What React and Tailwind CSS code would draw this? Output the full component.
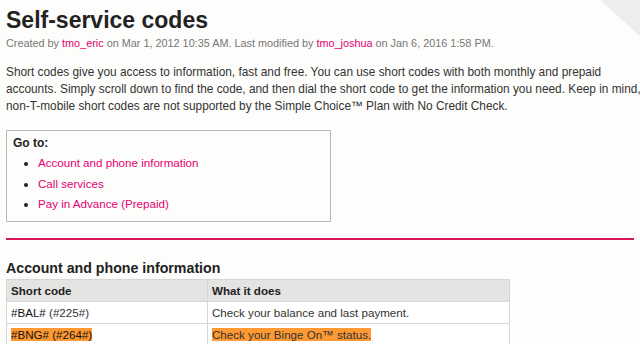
export default function App() {
  const goTo = ["Account and phone information", "Call services", "Pay in Advance (Prepaid)"];
  const intro = [
    "Short codes give you access to information, fast and free. You can use short codes with both monthly and prepaid",
    "accounts. Simply scroll down to find the code, and then dial the short code to get the information you need. Keep in mind,",
    "non-T-mobile short codes are not supported by the Simple Choice™ Plan with No Credit Check.",
  ];

  return (
    <div className="relative w-[640px] h-[344px] overflow-hidden bg-[#fdfdfb] font-[family-name:'Liberation_Sans',Arial,sans-serif] text-[#333]">
      {/* corner fold */}
      <div className="absolute right-0 top-0 w-[40px] h-[36px] bg-[#ededeb] [clip-path:polygon(0_0,100%_0,100%_100%)]" />

      <div className="px-[6px] pt-[6px]">
        <h1 className="text-[23px] leading-[28px] font-bold text-[#222]">Self-service codes</h1>
        <p className="mt-[2px] text-[10.85px] leading-[14px] text-[#777]">
          Created by <span className="text-[#e20074]">tmo_eric</span> on Mar 1, 2012 10:35 AM. Last modified by{" "}
          <span className="text-[#e20074]">tmo_joshua</span> on Jan 6, 2016 1:58 PM.
        </p>

        <p className="mt-[14px] text-[11.85px] leading-[17px] whitespace-nowrap">
          {intro.map((line, i) => (
            <span key={i} className="block">{line}</span>
          ))}
        </p>

        <div className="mt-[15px] w-[325px] h-[92px] border border-[#bbb] px-[6px] pt-[4px]">
          <div className="text-[12px] leading-[17px] font-bold text-[#222]">Go to:</div>
          <ul className="mt-[1px] pl-[25px] list-disc marker:text-[#222] text-[11.6px] leading-[20.5px] text-[#e20074]">
            {goTo.map((item) => (
              <li key={item}>{item}</li>
            ))}
          </ul>
        </div>

        <div className="mt-[16px] w-[628px] h-[2px] bg-[#d6175c]" />

        <h2 className="mt-[19px] text-[14.2px] leading-[18px] font-bold text-[#222]">Account and phone information</h2>

        <table className="mt-[2px] w-[504px] border-collapse text-[11.6px] text-[#333]">
          <tbody>
            <tr className="bg-[#e4e4e2] h-[22px]">
              <th className="w-[201px] border border-[#d6d6d6] px-[4px] text-left font-bold text-[#222]">Short code</th>
              <th className="border border-[#d6d6d6] px-[4px] text-left font-bold text-[#222]">What it does</th>
            </tr>
            <tr className="bg-white h-[22px]">
              <td className="border border-[#d6d6d6] px-[4px]">
                <span className="text-[#111]">#BAL#</span> (#225#)
              </td>
              <td className="border border-[#d6d6d6] px-[4px]">Check your balance and last payment.</td>
            </tr>
            <tr className="bg-white h-[22px]">
              <td className="border border-[#d6d6d6] px-[4px]">
                <span className="bg-[#ff9933] text-[#111]">#BNG# (#264#)</span>
              </td>
              <td className="border border-[#d6d6d6] px-[4px]">
                <span className="bg-[#ff9933]">Check your Binge On™ status.</span>
              </td>
            </tr>
          </tbody>
        </table>
      </div>
    </div>
  );
}
